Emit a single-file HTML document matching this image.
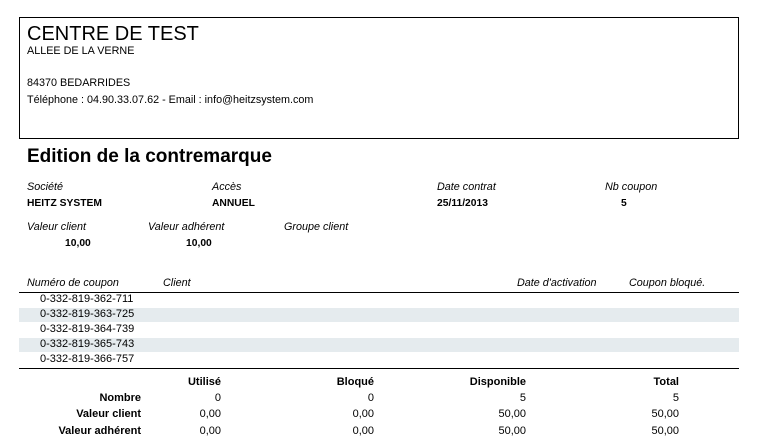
<!DOCTYPE html>
<html><head><meta charset="utf-8"><style>
body{margin:0;width:758px;height:445px;background:#fff;position:relative;font-family:"Liberation Sans",Arial,sans-serif;color:#000;overflow:hidden}
div{position:absolute;white-space:nowrap;line-height:1}
.s{font-size:10.8px}
.i{font-size:10.8px;font-style:italic}
.b{font-size:10.3px;font-weight:bold}
.n{font-size:11px}
.nb{font-size:11px;font-weight:bold}
.r{text-align:right}
</style></head><body>
<div style="left:19px;top:17px;width:718px;height:120px;border:1px solid #000"></div>
<div style="left:27px;top:24px;font-size:20px">CENTRE DE TEST</div>
<div class="s" style="left:27px;top:46px">ALLEE DE LA VERNE</div>
<div class="s" style="left:27px;top:78px">84370 BEDARRIDES</div>
<div class="s" style="left:27px;top:95px">Téléphone : 04.90.33.07.62 - Email : info@heitzsystem.com</div>
<div style="left:27px;top:147px;font-size:19px;font-weight:bold">Edition de la contremarque</div>

<div class="i" style="left:27px;top:182px">Société</div>
<div class="i" style="left:212px;top:182px">Accès</div>
<div class="i" style="left:437px;top:182px">Date contrat</div>
<div class="i" style="left:605px;top:182px">Nb coupon</div>
<div class="b" style="left:27px;top:199px">HEITZ SYSTEM</div>
<div class="b" style="left:212px;top:199px">ANNUEL</div>
<div class="b" style="left:437px;top:199px">25/11/2013</div>
<div class="b" style="left:621px;top:199px">5</div>

<div class="i" style="left:27px;top:222px">Valeur client</div>
<div class="i" style="left:148px;top:222px">Valeur adhérent</div>
<div class="i" style="left:284px;top:222px">Groupe client</div>
<div class="b" style="left:65px;top:239px">10,00</div>
<div class="b" style="left:186px;top:239px">10,00</div>

<div class="i" style="left:27px;top:278px">Numéro de coupon</div>
<div class="i" style="left:163px;top:278px">Client</div>
<div class="i" style="left:517px;top:278px">Date d'activation</div>
<div class="i" style="left:629px;top:278px">Coupon bloqué.</div>
<div style="left:19px;top:292px;width:720px;height:1px;background:#000"></div>
<div style="left:19px;top:308px;width:720px;height:14px;background:#e5ebee"></div>
<div style="left:19px;top:338px;width:720px;height:14px;background:#e5ebee"></div>
<div class="n" style="left:40px;top:294px">0-332-819-362-711</div>
<div class="n" style="left:40px;top:309px">0-332-819-363-725</div>
<div class="n" style="left:40px;top:324px">0-332-819-364-739</div>
<div class="n" style="left:40px;top:339px">0-332-819-365-743</div>
<div class="n" style="left:40px;top:354px">0-332-819-366-757</div>
<div style="left:19px;top:368px;width:720px;height:1px;background:#000"></div>

<div class="nb r" style="left:121px;top:377px;width:100px">Utilisé</div>
<div class="nb r" style="left:274px;top:377px;width:100px">Bloqué</div>
<div class="nb r" style="left:426px;top:377px;width:100px">Disponible</div>
<div class="nb r" style="left:579px;top:377px;width:100px">Total</div>

<div class="nb r" style="left:21px;top:393px;width:120px">Nombre</div>
<div class="nb r" style="left:21px;top:409px;width:120px">Valeur client</div>
<div class="nb r" style="left:21px;top:426px;width:120px">Valeur adhérent</div>

<div class="n r" style="left:121px;top:393px;width:100px">0</div>
<div class="n r" style="left:274px;top:393px;width:100px">0</div>
<div class="n r" style="left:426px;top:393px;width:100px">5</div>
<div class="n r" style="left:579px;top:393px;width:100px">5</div>
<div class="n r" style="left:121px;top:409px;width:100px">0,00</div>
<div class="n r" style="left:274px;top:409px;width:100px">0,00</div>
<div class="n r" style="left:426px;top:409px;width:100px">50,00</div>
<div class="n r" style="left:579px;top:409px;width:100px">50,00</div>
<div class="n r" style="left:121px;top:426px;width:100px">0,00</div>
<div class="n r" style="left:274px;top:426px;width:100px">0,00</div>
<div class="n r" style="left:426px;top:426px;width:100px">50,00</div>
<div class="n r" style="left:579px;top:426px;width:100px">50,00</div>
</body></html>
